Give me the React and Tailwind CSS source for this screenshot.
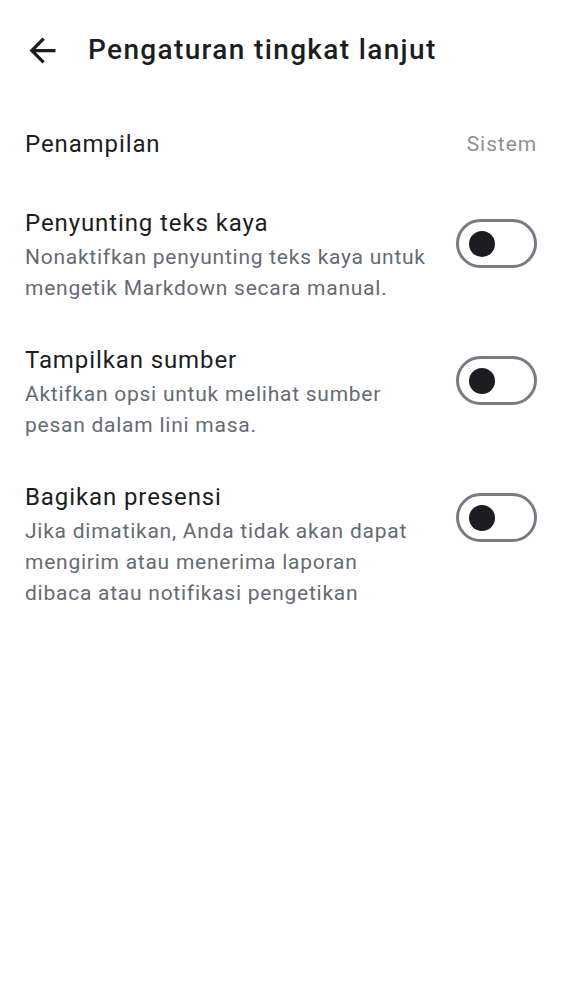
import React from "react";

function Toggle() {
  return (
    <div className="w-[81px] h-[49px] rounded-full border-[3px] border-[#767c86] flex items-center pl-[10px] shrink-0">
      <div className="w-[26px] h-[26px] rounded-full bg-[#1b1d22]" />
    </div>
  );
}

function ToggleRow({ title, lines }) {
  return (
    <div className="flex items-start justify-between py-[19px]">
      <div className="flex flex-col">
        <div className="text-[24px] leading-[37px] tracking-[0.9px] text-[#1b1d22]">{title}</div>
        {lines.map((l, i) => (
          <div
            key={i}
            className="text-[21px] leading-[31px] tracking-[0.75px] text-[#656b75] whitespace-nowrap"
          >
            {l}
          </div>
        ))}
      </div>
      <div className="mt-[14px]">
        <Toggle />
      </div>
    </div>
  );
}

export default function App() {
  return (
    <div
      className="w-[562px] h-[1000px] bg-white"
      style={{ fontFamily: "Roboto, 'Noto Sans', sans-serif" }}
    >
      <div className="h-[100px] flex items-center">
        <div className="ml-[23px] w-[39px] h-[39px] flex items-center justify-center">
          <svg width="39" height="39" viewBox="0 0 24 24" fill="#1b1d22">
            <path d="M20 11H7.83l5.59-5.59L12 4l-8 8 8 8 1.41-1.41L7.83 13H20v-2z" />
          </svg>
        </div>
        <div className="ml-[26px] text-[28px] font-medium tracking-[1.35px] text-[#1b1d22] leading-none">
          Pengaturan tingkat lanjut
        </div>
      </div>
      <div className="px-[25px] pt-[7px]">
        <div className="flex items-center justify-between pt-[19px] pb-[23px]">
          <div className="text-[24px] leading-[37px] tracking-[0.9px] text-[#1b1d22]">Penampilan</div>
          <div className="text-[21px] tracking-[0.9px] text-[#8a919b]">Sistem</div>
        </div>
        <ToggleRow
          title="Penyunting teks kaya"
          lines={["Nonaktifkan penyunting teks kaya untuk", "mengetik Markdown secara manual."]}
        />
        <ToggleRow
          title="Tampilkan sumber"
          lines={["Aktifkan opsi untuk melihat sumber", "pesan dalam lini masa."]}
        />
        <ToggleRow
          title="Bagikan presensi"
          lines={[
            "Jika dimatikan, Anda tidak akan dapat",
            "mengirim atau menerima laporan",
            "dibaca atau notifikasi pengetikan",
          ]}
        />
      </div>
    </div>
  );
}
